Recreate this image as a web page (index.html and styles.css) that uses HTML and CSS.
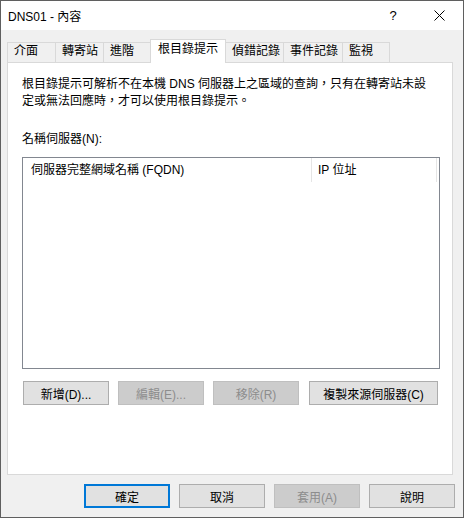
FILE: index.html
```html
<!DOCTYPE html>
<html>
<head>
<meta charset="utf-8">
<title>DNS01 - 內容</title>
<link rel="stylesheet" href="styles.css">
</head>
<body>
<div class="window">
  <div class="titlebar">
    <span class="title">DNS01 - 內容</span>
    <span class="caption-btn help">?</span>
    <span class="caption-btn close"><svg width="11" height="11" viewBox="0 0 11 11"><path d="M0.5 0.5L10.5 10.5M10.5 0.5L0.5 10.5" stroke="#000" stroke-width="1" fill="none"/></svg></span>
  </div>

  <div class="client">
    <div class="tabs">
      <div class="tab">介面</div>
      <div class="tab">轉寄站</div>
      <div class="tab">進階</div>
      <div class="tab selected">根目錄提示</div>
      <div class="tab">偵錯記錄</div>
      <div class="tab">事件記錄</div>
      <div class="tab">監視</div>
    </div>

    <div class="panel">
      <p class="hint">根目錄提示可解析不在本機 DNS 伺服器上之區域的查詢，只有在轉寄站未設<br>定或無法回應時，才可以使用根目錄提示。</p>

      <div class="label">名稱伺服器(N):</div>

      <div class="listbox">
        <div class="list-header">
          <div class="col col-name">伺服器完整網域名稱 (FQDN)</div>
          <div class="col col-ip">IP 位址</div>
        </div>
      </div>

      <div class="list-buttons">
        <div class="btn">新增(D)...</div>
        <div class="btn disabled">編輯(E)...</div>
        <div class="btn disabled">移除(R)</div>
        <div class="btn wide">複製來源伺服器(C)</div>
      </div>
    </div>

    <div class="dialog-buttons">
      <div class="btn default">確定</div>
      <div class="btn">取消</div>
      <div class="btn disabled">套用(A)</div>
      <div class="btn">說明</div>
    </div>
  </div>
</div>
</body>
</html>
```

FILE: styles.css
```css
/* Windows property sheet look */

html, body
{ margin: 0;
padding: 0;
background: #f0f0f0;
}

body
{ font-family: "Liberation Sans", "Noto Sans CJK TC", sans-serif;
font-size: 12px;
color: #000;
}

div.window
{ width: 464px;
height: 518px;
box-sizing: border-box;
border: 1px solid #5f5f5f;
display: flex;
flex-direction: column;
background: #f0f0f0;
}

/* Title bar */

div.titlebar
{ height: 29px;
flex: none;
background: #fff;
display: flex;
align-items: center;
padding-left: 7px;
padding-right: 1px;
}

span.title
{ flex: 1;
}

span.caption-btn
{ width: 46px;
height: 29px;
display: flex;
align-items: center;
justify-content: center;
}

span.help
{ font-size: 13px;
}

/* Client area */

div.client
{ flex: 1;
padding: 0 10px 9px 6px;
display: flex;
flex-direction: column;
}

div.tabs
{ display: flex;
align-items: flex-end;
height: 23px;
margin-top: 9px;
flex: none;
}

div.tab
{ box-sizing: border-box;
height: 20px;
line-height: 17px;
padding: 0 0 2px 6px;
border: 1px solid #d9d9d9;
border-bottom: none;
margin-right: -1px;
background: #f0f0f0;
white-space: nowrap;
}

div.tab:nth-child(1) { width: 49px; }
div.tab:nth-child(2) { width: 49px; }
div.tab:nth-child(3) { width: 48px; }
div.tab:nth-child(4) { width: 76px; }
div.tab:nth-child(5) { width: 59px; }
div.tab:nth-child(6) { width: 60px; }
div.tab:nth-child(7) { width: 48px; }

div.tab.selected
{ height: 24px;
margin-bottom: -1px;
padding: 1px 0 5px 7px;
background: #fff;
position: relative;
z-index: 1;
}

div.panel
{ box-sizing: border-box;
height: 413px;
flex: none;
border: 1px solid #d9d9d9;
background: #fff;
padding: 13px 12px 0 14px;
}

p.hint
{ margin: 0;
line-height: 17px;
}

div.label
{ margin-top: 21px;
line-height: 17px;
}

div.listbox
{ box-sizing: border-box;
margin-top: 9px;
width: 418px;
height: 212px;
border: 1px solid #828790;
background: #fff;
}

div.list-header
{ display: flex;
height: 24px;
line-height: 24px;
}

div.col
{ box-sizing: border-box;
border-right: 1px solid #e5e5e5;
white-space: nowrap;
}

div.col-name
{ width: 289px;
padding-left: 8px;
}

div.col-ip
{ width: 125px;
padding-left: 6px;
}

/* Buttons */

div.btn
{ box-sizing: border-box;
width: 86px;
height: 24px;
border: 1px solid #adadad;
background: #e1e1e1;
display: flex;
align-items: center;
justify-content: center;
white-space: nowrap;
}

div.btn.disabled
{ background: #cccccc;
border-color: #bfbfbf;
color: #8d8d8d;
}

div.btn.default
{ border: 2px solid #0078d7;
}

div.btn.wide
{ width: 129px;
margin-left: auto;
}

div.list-buttons
{ display: flex;
gap: 9px;
margin: 12px 2px 0 1px;
}

div.dialog-buttons
{ display: flex;
justify-content: flex-end;
gap: 9px;
margin: 9px -2px 0 0;
}
```
